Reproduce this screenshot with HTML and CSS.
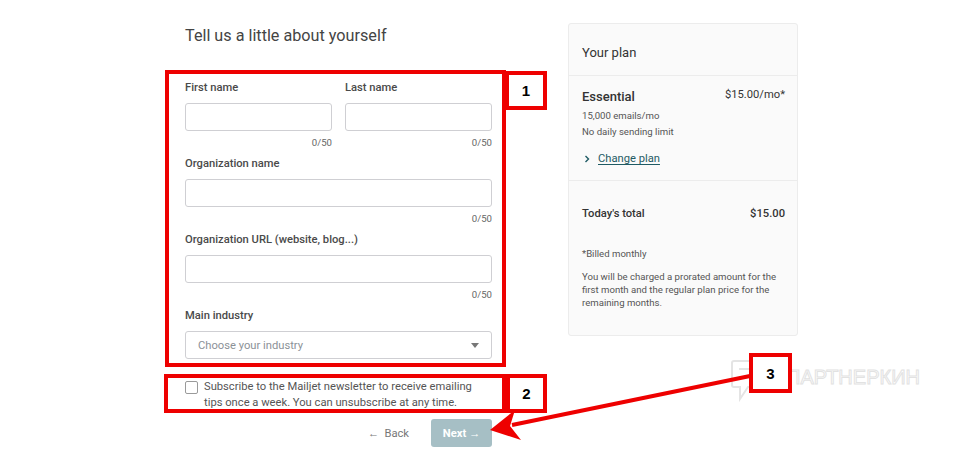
FILE: index.html
```html
<!DOCTYPE html>
<html lang="en">
<head>
<meta charset="utf-8">
<title>Tell us a little about yourself</title>
<link rel="stylesheet" href="styles.css">
</head>
<body>
<div class="page">
  <main class="form-col">
    <h1 class="title">Tell us a little about yourself</h1>
    <div class="row">
      <div class="field">
        <label class="label">First name</label>
        <div class="input"></div>
        <div class="counter">0/50</div>
      </div>
      <div class="field">
        <label class="label">Last name</label>
        <div class="input"></div>
        <div class="counter">0/50</div>
      </div>
    </div>
    <div class="field">
      <label class="label">Organization name</label>
      <div class="input"></div>
      <div class="counter">0/50</div>
    </div>
    <div class="field">
      <label class="label">Organization URL (website, blog...)</label>
      <div class="input"></div>
      <div class="counter">0/50</div>
    </div>
    <div class="field">
      <label class="label">Main industry</label>
      <div class="input select">
        <span class="placeholder">Choose your industry</span>
        <span class="caret"></span>
      </div>
    </div>
    <div class="check-row">
      <span class="checkbox"></span>
      <p class="check-text">Subscribe to the Mailjet newsletter to receive emailing tips once a week. You can unsubscribe at any time.</p>
    </div>
    <div class="actions">
      <span class="back">&larr;&nbsp; Back</span>
      <span class="next">Next &rarr;</span>
    </div>
  </main>

  <aside class="card">
    <div class="card-head">Your plan</div>
    <div class="card-sec plan">
      <div class="plan-top">
        <span class="plan-name">Essential</span>
        <span class="plan-price">$15.00/mo*</span>
      </div>
      <div class="small">15,000 emails/mo</div>
      <div class="small">No daily sending limit</div>
      <div class="change">
        <svg class="chev" width="6" height="8" viewBox="0 0 6 8"><path d="M1.5 1 L4.5 4 L1.5 7" fill="none" stroke="#1f5b64" stroke-width="1.4"/></svg>
        <span class="change-link">Change plan</span>
      </div>
    </div>
    <div class="card-sec total">
      <div class="total-row"><span>Today's total</span><span>$15.00</span></div>
      <div class="billed">*Billed monthly</div>
      <p class="note">You will be charged a prorated amount for the first month and the regular plan price for the remaining months.</p>
    </div>
  </aside>
</div>

<div class="watermark">
  <svg class="wm-icon" width="36" height="44" viewBox="0 0 36 44">
    <path d="M4 2 H32 Q34 2 34 4 V26 Q34 28 32 28 H18 L10 40 V28 H4 Q2 28 2 26 V4 Q2 2 4 2 Z" fill="none" stroke="#e4e4e4" stroke-width="2"/>
    <path d="M9 10 H27 M9 18 H22" stroke="#e4e4e4" stroke-width="2"/>
  </svg>
  <span class="wm-text">ПАРТНЕРКИН</span>
</div>

<div class="mark box1"></div>
<div class="mark tag tag1">1</div>
<div class="mark box2"></div>
<div class="mark tag tag2">2</div>
<div class="mark tag tag3">3</div>
<svg class="arrow" width="974" height="453" viewBox="0 0 974 453">
  <line x1="750" y1="376" x2="512" y2="425" stroke="#ee0000" stroke-width="4"/>
  <polygon points="490,430 515,410 510,426 521,440" fill="#ee0000"/>
</svg>
</body>
</html>
```

FILE: styles.css
```css
* { box-sizing: border-box; }
html, body { margin: 0; padding: 0; background: #fff; }
body {
  font-family: Roboto, "Liberation Sans", Arial, sans-serif;
  color: #444;
  width: 974px;
  height: 453px;
  position: relative;
  overflow: hidden;
}
.page {
  display: flex;
  align-items: flex-start;
  gap: 76px;
  padding-left: 185px;
}
.form-col {
  width: 307px;
  padding-top: 26px;
  display: flex;
  flex-direction: column;
}
.title {
  margin: 0 0 34px;
  font-size: 16.2px;
  line-height: 20px;
  font-weight: 400;
  color: #444;
}
.row { display: flex; gap: 13px; }
.row .field { flex: 1; }
.field { display: flex; flex-direction: column; margin-bottom: 6px; }
.label {
  font-size: 11.2px;
  line-height: 16px;
  font-weight: 500;
  color: #4a4a4a;
  margin-bottom: 7px;
}
.input {
  height: 28px;
  border: 1px solid #cfcfd3;
  border-radius: 3px;
  background: #fff;
}
.counter {
  margin-top: 5px;
  text-align: right;
  font-size: 9.6px;
  line-height: 14px;
  color: #666;
}
.select {
  display: flex;
  align-items: center;
  justify-content: space-between;
  padding: 0 12px 0 12px;
}
.placeholder { font-size: 11.2px; color: #8b9197; }
.caret {
  width: 0; height: 0;
  border-left: 4px solid transparent;
  border-right: 4px solid transparent;
  border-top: 5px solid #777;
}
.check-row {
  display: flex;
  gap: 6px;
  margin-top: 14px;
}
.checkbox {
  flex: none;
  width: 13px;
  height: 13px;
  margin-top: 2px;
  border: 1px solid #9a9a9a;
  border-radius: 2px;
}
.check-text {
  margin: 0;
  font-size: 11.2px;
  line-height: 16px;
  color: #555;
  width: 280px;
}
.actions {
  display: flex;
  justify-content: flex-end;
  align-items: center;
  gap: 22px;
  margin-top: 8px;
}
.back { font-size: 11.2px; color: #777; }
.next {
  width: 61px;
  height: 28px;
  display: flex;
  align-items: center;
  justify-content: center;
  background: #a6bfc5;
  color: #fff;
  font-size: 11.2px;
  font-weight: 700;
  border-radius: 3px;
}
.card {
  margin-top: 23px;
  width: 230px;
  background: #fafafa;
  border: 1px solid #ececec;
  border-radius: 3px;
}
.card-head {
  height: 52px;
  display: flex;
  align-items: center;
  padding: 6px 13px 0;
  font-size: 13px;
  color: #333;
  border-bottom: 1px solid #ececec;
}
.card-sec { padding: 0 12px 0 13px; }
.plan { padding-top: 12px; padding-bottom: 13px; border-bottom: 1px solid #ececec; }
.plan-top {
  display: flex;
  justify-content: space-between;
  align-items: flex-start;
  height: 20px;
}
.plan-name { font-size: 13px; line-height: 18px; font-weight: 500; color: #333; }
.plan-price { font-size: 11.2px; line-height: 14px; color: #333; }
.small { font-size: 9.6px; line-height: 16px; color: #555; }
.change {
  margin-top: 11px;
  font-size: 11.2px;
  line-height: 16px;
  display: flex;
  align-items: center;
  gap: 8px;
  padding-left: 2px;
}
.chev { flex: none; }
.change-link { color: #1f5b64; text-decoration: underline; text-underline-offset: 2px; }
.total { padding-top: 25px; padding-bottom: 26px; }
.total-row {
  display: flex;
  justify-content: space-between;
  font-size: 11.2px;
  line-height: 16px;
  font-weight: 500;
  color: #333;
}
.billed { margin-top: 25px; font-size: 9.6px; line-height: 14px; color: #555; }
.note { margin: 9px 0 0; font-size: 9.6px; line-height: 13px; color: #555; }

.watermark {
  position: absolute;
  left: 730px;
  top: 359px;
  display: flex;
  align-items: flex-start;
  gap: 20px;
}
.wm-text {
  font-family: "Liberation Sans", Arial, sans-serif;
  font-size: 20px;
  line-height: 24px;
  margin-top: 6px;
  color: transparent;
  -webkit-text-stroke: 1px #e2e2e2;
}
.mark { position: absolute; border: 4px solid #ee0000; }
.box1 { left: 165px; top: 70px; width: 341px; height: 297px; }
.box2 { left: 164px; top: 374px; width: 342px; height: 39px; }
.tag {
  display: flex;
  align-items: center;
  justify-content: center;
  background: #fff;
  font-family: "Liberation Sans", Arial, sans-serif;
  font-weight: 700;
  font-size: 15px;
  color: #000;
}
.tag1 { left: 505px; top: 71px; width: 42px; height: 39px; }
.tag2 { left: 506px; top: 374px; width: 41px; height: 39px; }
.tag3 { left: 749px; top: 353px; width: 43px; height: 40px; }
.arrow { position: absolute; left: 0; top: 0; pointer-events: none; }
```
